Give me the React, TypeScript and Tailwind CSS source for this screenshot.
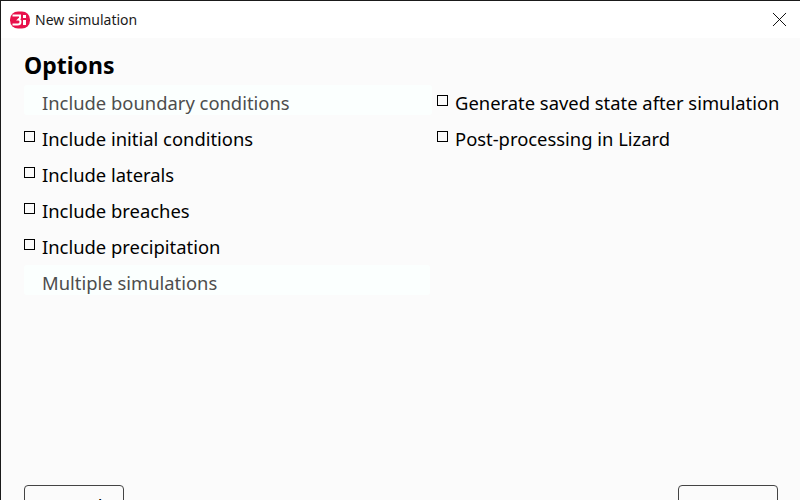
import React from "react";
import { X } from "lucide-react";

const leftOptions = [
  { label: "Include boundary conditions", disabled: true },
  { label: "Include initial conditions" },
  { label: "Include laterals" },
  { label: "Include breaches" },
  { label: "Include precipitation" },
  { label: "Multiple simulations", disabled: true, narrow: true },
];

const rightOptions = [
  { label: "Generate saved state after simulation" },
  { label: "Post-processing in Lizard" },
];

type OptionRowProps = { label: string; disabled?: boolean; narrow?: boolean };

const OptionRow: React.FC<OptionRowProps> = ({ label, disabled, narrow }) => (
  <div className={`h-[36px] ${disabled ? "text-[#4d4d4d]" : "text-black"}`}>
    <div
      className={`flex h-[30px] items-center rounded-[3px] ${narrow ? "w-[406px]" : "w-full"} ${
        disabled ? "bg-[#fbfffe]" : ""
      }`}
    >
      <div className="w-[18px] shrink-0">
        {!disabled && <div className="h-[11px] w-[11px] border border-black" />}
      </div>
      <span className="whitespace-nowrap pt-[6px]">{label}</span>
    </div>
  </div>
);

const Logo = () => (
  <svg width="20" height="18" viewBox="0 0 20 18" className="shrink-0">
    <rect x="0" y="0.5" width="20" height="17" rx="8" fill="#e8114b" />
    <path d="M2.500 4.500h7.500v2.500l-1.500 1.500c1.500 0 2 1 2 2.500c0 1.500-1.500 2.500-3 2.500H2.500" fill="none" stroke="#fff" strokeWidth="2" />
    <rect x="13" y="4" width="3" height="3" fill="#fff" />
    <rect x="13" y="9" width="3" height="5" fill="#fff" />
  </svg>
);

export default function App() {
  return (
    <div className="flex h-[500px] w-[800px] flex-col overflow-hidden border-l border-t border-[#1a1a1a] bg-[#fbfbfb] font-['Noto_Sans',sans-serif]">
      {/* Title bar */}
      <div className="flex h-[37px] shrink-0 items-center justify-between bg-white pl-[9px] pr-[8px]">
        <div className="flex items-center gap-[5px]">
          <Logo />
          <span className="text-[14px] text-[#1a1a1a]">New simulation</span>
        </div>
        <X size={25} strokeWidth={0.9} className="text-black" />
      </div>

      {/* Options */}
      <div className="flex flex-1 flex-col justify-between pl-[23px] pr-[22px]">
        <div>
          <h1 className="mt-[10px] mb-[3px] h-[34px] text-[23px] font-bold leading-[34px] text-black">Options</h1>
          <div className="grid grid-cols-[408px_1fr] gap-x-[5px] text-[18.4px]">
            <div>
              {leftOptions.map((o) => (
                <OptionRow key={o.label} {...o} />
              ))}
            </div>
            <div>
              {rightOptions.map((o) => (
                <OptionRow key={o.label} {...o} />
              ))}
            </div>
          </div>
        </div>

        <div className="-mb-[28px] flex items-start justify-between text-[18.4px]">
          <button className="h-[41px] w-[100px] rounded-t-[4px] border border-[#444] text-center">Cancel</button>
          <button className="h-[43px] w-[100px] rounded-[4px] border border-[#444] text-center">Next</button>
        </div>
      </div>
    </div>
  );
}
